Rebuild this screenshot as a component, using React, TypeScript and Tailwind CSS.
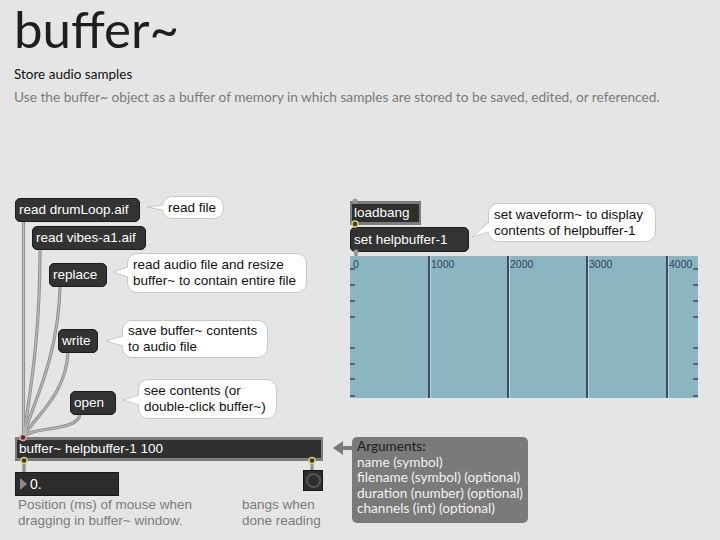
import type { ReactNode } from "react";

const sans = "font-['Liberation_Sans',Arial,sans-serif]";

function Msg({ className, children }: { className: string; children: ReactNode }) {
  return (
    <div
      className={`absolute h-[24px] flex items-center px-[3px] rounded-[5px] bg-[#333333] border border-[#1c1c1c] text-white text-[13.5px] leading-none whitespace-nowrap font-['Liberation_Sans',Arial,sans-serif] ${className}`}
    >
      {children}
    </div>
  );
}

function Obj({ className, children }: { className: string; children: ReactNode }) {
  return (
    <div
      className={`absolute h-[24px] flex items-center px-[2px] bg-[#2f2f2f] border-x-2 border-y-[3px] border-[#7c7c7c] text-white text-[13.5px] leading-none whitespace-nowrap font-['Liberation_Sans',Arial,sans-serif] ${className}`}
    >
      {children}
    </div>
  );
}

type Tip = { x: number; y: number; y1: number; y2: number };

function Bubble({ className, tip, children }: { className: string; tip: Tip; children: ReactNode }) {
  return (
    <div
      className={`absolute flex flex-col justify-center px-[5px] bg-white border border-[#c9c9c9] rounded-[10px] text-[#111] text-[13.5px] leading-[16px] whitespace-nowrap font-['Liberation_Sans',Arial,sans-serif] ${className}`}
    >
      {children}
      <svg className="absolute left-0 top-0 overflow-visible" width={1} height={1}>
        <path d={`M 1 ${tip.y1} L ${tip.x} ${tip.y} L 1 ${tip.y2} Z`} fill="#fff" />
        <path d={`M -0.5 ${tip.y1} L ${tip.x} ${tip.y} L -0.5 ${tip.y2}`} fill="none" stroke="#c9c9c9" strokeWidth={1} />
      </svg>
    </div>
  );
}

function Port({ x, y, c }: { x: number; y: number; c: string }) {
  return <circle cx={x} cy={y} r={3} fill="#3a3a3a" stroke={c} strokeWidth={1.5} />;
}

const ticks = [13, 29, 45, 61, 92, 108, 123, 140];

export default function App() {
  return (
    <div className="w-[720px] h-[540px] overflow-hidden bg-[#e5e5e5]">
      <header className="h-[180px] px-[14px] font-['Lato','Noto_Sans',sans-serif]">
        <h1 className="text-[51px] leading-[58px] text-[#1e1e1e]">buffer~</h1>
        <p className="mt-[7px] text-[13.5px] leading-[19px] text-[#111]">Store audio samples</p>
        <p className="mt-[3px] text-[13.7px] leading-[19px] text-[#7a7a7a] whitespace-nowrap">
          Use the buffer~ object as a buffer of memory in which samples are stored to be saved, edited, or referenced.
        </p>
      </header>

      <div className="relative h-[360px]">
        {/* patch cords */}
        <svg className="absolute left-0 top-0" width={720} height={360}>
          <g fill="none" stroke="#8f8f8f" strokeWidth={3.2} strokeLinecap="round">
            <path d="M 23.5 42 L 23.5 257" />
            <path d="M 40 70 C 40 170, 27 225, 24 257" />
            <path d="M 60 107 C 58 185, 28 232, 24 257" />
            <path d="M 68 172 C 66 218, 30 240, 24 257" />
            <path d="M 80 234 C 78 252, 32 246, 24 257" />
            <path d="M 24 281 L 24 292" />
            <path d="M 312 281 L 312 290" />
            <path d="M 355 44 L 355 47" />
            <path d="M 356 72 L 356 76" />
          </g>
          <g fill="none" stroke="#b9b9b9" strokeWidth={1.3} strokeLinecap="round">
            <path d="M 23.5 42 L 23.5 257" />
            <path d="M 40 70 C 40 170, 27 225, 24 257" />
            <path d="M 60 107 C 58 185, 28 232, 24 257" />
            <path d="M 68 172 C 66 218, 30 240, 24 257" />
            <path d="M 80 234 C 78 252, 32 246, 24 257" />
          </g>
        </svg>

        {/* left column */}
        <Msg className="left-[15px] top-[18px] w-[125px]">read drumLoop.aif</Msg>
        <Bubble className="left-[162px] top-[16px] w-[62px] h-[23px]" tip={{ x: -16, y: 10, y1: 8, y2: 13 }}>
          read file
        </Bubble>
        <Msg className="left-[32px] top-[46px] w-[114px]">read vibes-a1.aif</Msg>
        <Msg className="left-[49px] top-[83px] w-[58px]">replace</Msg>
        <Bubble className="left-[127px] top-[73px] w-[180px] h-[40px]" tip={{ x: -15, y: 18, y1: 13, y2: 23 }}>
          <span>read audio file and resize</span>
          <span>buffer~ to contain entire file</span>
        </Bubble>
        <Msg className="left-[58px] top-[149px] w-[40px]">write</Msg>
        <Bubble className="left-[122px] top-[140px] w-[146px] h-[38px]" tip={{ x: -17, y: 20, y1: 15, y2: 25 }}>
          <span>save buffer~ contents</span>
          <span>to audio file</span>
        </Bubble>
        <Msg className="left-[70px] top-[211px] w-[46px]">open</Msg>
        <Bubble className="left-[138px] top-[199px] w-[139px] h-[40px]" tip={{ x: -16, y: 20, y1: 15, y2: 25 }}>
          <span>see contents (or</span>
          <span>double-click buffer~)</span>
        </Bubble>

        <Obj className="left-[15px] top-[257px] w-[308px]">buffer~ helpbuffer-1 100</Obj>

        <div className="absolute left-[15px] top-[292px] w-[104px] h-[24px] flex items-center gap-[3px] pl-[4px] bg-[#2c2c2c] border border-[#1a1a1a] text-white text-[14px] leading-none font-['Liberation_Sans',Arial,sans-serif]">
          <svg width={7} height={12} viewBox="0 0 7 12">
            <path d="M0 0 L7 6 L0 12 Z" fill="#8a8a8a" />
          </svg>
          <span>0.</span>
        </div>

        <div className="absolute left-[303px] top-[290px] w-[20px] h-[21px] flex items-center justify-center bg-[#2e2e2e] border border-[#141414]">
          <div className="w-[15px] h-[15px] rounded-full border-2 border-[#575757]" />
        </div>

        <p className={`absolute left-[18px] top-[317px] text-[13.5px] leading-[16px] text-[#7b7b7b] whitespace-nowrap ${sans}`}>
          Position (ms) of mouse when
          <br />
          dragging in buffer~ window.
        </p>
        <p className={`absolute left-[242px] top-[317px] text-[13.5px] leading-[16px] text-[#7b7b7b] whitespace-nowrap ${sans}`}>
          bangs when
          <br />
          done reading
        </p>

        {/* arguments */}
        <svg className="absolute left-[333px] top-[261px]" width={19} height={14} viewBox="0 0 19 14">
          <path d="M0 7 L10 0 L10 5 L19 5 L19 9 L10 9 L10 14 Z" fill="#7a7a7a" />
        </svg>
        <div className="absolute left-[352px] top-[257px] w-[176px] h-[86px] pt-[2px] px-[5px] rounded-[5px] bg-[#7a7a7a] text-[13.6px] leading-[15.6px] text-[#f2f2f2] whitespace-nowrap font-['Lato','Noto_Sans',sans-serif]">
          <div className="text-[#1c1c1c]">Arguments:</div>
          <div>name (symbol)</div>
          <div>filename (symbol) (optional)</div>
          <div>duration (number) (optional)</div>
          <div>channels (int) (optional)</div>
        </div>

        {/* right column */}
        <Obj className="left-[350px] top-[21px] w-[71px] h-[23px]">loadbang</Obj>
        <Msg className="left-[350px] top-[47px] w-[119px] h-[25px]">set helpbuffer-1</Msg>
        <Bubble className="left-[488px] top-[23px] w-[168px] h-[39px]" tip={{ x: -17, y: 33, y1: 18, y2: 28 }}>
          <span>set waveform~ to display</span>
          <span>contents of helpbuffer-1</span>
        </Bubble>

        <div className={`absolute left-[350px] top-[76px] w-[348px] h-[142px] flex bg-[#8ab5c1] text-[10.5px] leading-none text-[#33415f] ${sans}`}>
          <div className="w-[78px] pl-[3px] pt-[3px]">0</div>
          <div className="w-[79px] pl-[1px] pt-[3px] border-l-2 border-[#3b4a6a] shadow-[inset_1px_0_0_#b7d4de]">1000</div>
          <div className="w-[79px] pl-[1px] pt-[3px] border-l-2 border-[#3b4a6a] shadow-[inset_1px_0_0_#b7d4de]">2000</div>
          <div className="w-[80px] pl-[1px] pt-[3px] border-l-2 border-[#3b4a6a] shadow-[inset_1px_0_0_#b7d4de]">3000</div>
          <div className="flex-1 pl-[1px] pt-[3px] border-l-2 border-[#3b4a6a] shadow-[inset_1px_0_0_#b7d4de]">4000</div>
          <svg className="absolute left-0 top-0" width={348} height={142}>
            {ticks.map((t) => (
              <g key={t} stroke="#3b4a6a" strokeWidth={1.5}>
                <line x1={0} y1={t} x2={5} y2={t} />
                <line x1={343} y1={t} x2={348} y2={t} />
              </g>
            ))}
          </svg>
        </div>

        {/* inlets / outlets */}
        <svg className="absolute left-0 top-0 pointer-events-none" width={720} height={360}>
          <Port x={23} y={257.5} c="#e7a19c" />
          <Port x={24} y={280.5} c="#d6cf6a" />
          <Port x={312} y={280.5} c="#d6cf6a" />
          <Port x={355} y={44} c="#d6cf6a" />
          <circle cx={355} cy={21} r={2.5} fill="#9a9a9a" />
          <circle cx={356} cy={72} r={2.5} fill="#9a9a9a" />
        </svg>
      </div>
    </div>
  );
}
